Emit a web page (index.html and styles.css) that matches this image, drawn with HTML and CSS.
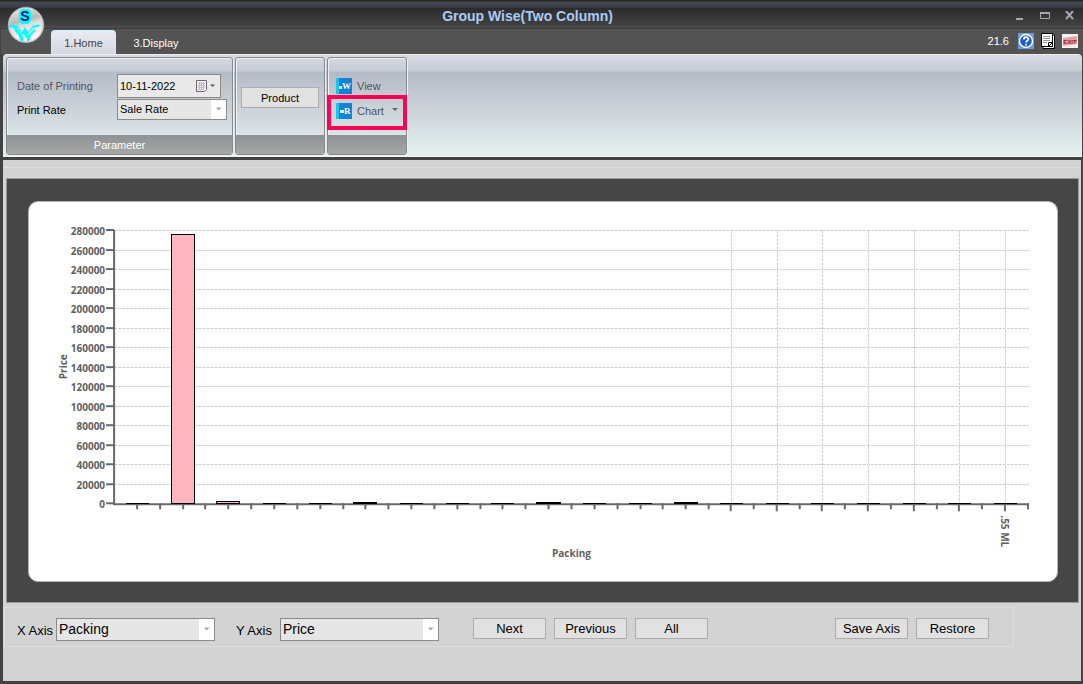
FILE: index.html
```html
<!DOCTYPE html>
<html lang="en">
<head>
<meta charset="utf-8">
<title>Group Wise(Two Column)</title>
<link rel="stylesheet" href="styles.css">
</head>
<body>
<div class="window">
  <svg class="logo" viewBox="0 0 38 38" aria-hidden="true">
    <defs>
      <linearGradient id="orb" x1="0" y1="0" x2=".3" y2="1">
        <stop offset="0" stop-color="#f4f4f4"/><stop offset=".45" stop-color="#b9b9b9"/><stop offset=".6" stop-color="#dedede"/><stop offset="1" stop-color="#ffffff"/>
      </linearGradient>
    </defs>
    <circle cx="19" cy="19" r="18.5" fill="#6b6b6b"/>
    <circle cx="19" cy="19" r="17" fill="url(#orb)" stroke="#d2d2d2" stroke-width="1.5"/>
    <path d="M15 3h6l3 3v9l-3 3h-6l-3-3V6z" fill="#00ffff"/>
    <path d="M2 19.500l3-1 6 1.500 4 6 3-5 3 5 4-6 6-1.500 3 1-2 1-5 1.500-5 5-3 6-2-5-1.500 0-2 5-3-6-4-5-5-1.500z" fill="#00ffff"/>
    <path d="M8 24l5 5 1 5M28 24l-5 5-1 5M15 28v7M21 28v7" stroke="#00ffff" stroke-width="2" fill="none"/>
    <path d="M10 21l6 9M26 21l-6 9" stroke="#e0e0e0" fill="none"/>
    <text class="logo-letter" x="18" y="15" text-anchor="middle">S</text>
  </svg>

  <header class="titlebar">
    <h1 class="title">Group Wise(Two Column)</h1>
    <div class="window-buttons">
      <button class="icon-button" aria-label="Minimize"><svg width="10" height="10"><path d="M1 8h7" stroke="#a2a9b5" stroke-width="2"/></svg></button>
      <button class="icon-button" aria-label="Maximize"><svg width="10" height="10"><path d="M.5 1.500h9v6h-9z" fill="none" stroke="#a2a9b5"/><path d="M0 2h10" stroke="#a2a9b5" stroke-width="2"/></svg></button>
      <button class="icon-button" aria-label="Close"><svg width="10" height="10"><path d="M1 0l7 8M8 0L1 8" stroke="#a2a9b5" stroke-width="2"/></svg></button>
    </div>
  </header>

  <nav class="tabs">
    <button class="tab tab-active">1.Home</button>
    <button class="tab">3.Display</button>
    <div class="tools">
      <span class="version">21.6</span>
      <button class="icon-button" aria-label="Help"><svg width="16" height="16"><path d="M0 0h16v16H0z" fill="#6b9bd8"/><circle cx="8" cy="8" r="6.5" fill="#1c5ccc" stroke="#fff" stroke-width="1.4"/><path d="M5.8 6.400c0-3 4.600-3 4.600-.3 0 1.600-2.300 1.700-2.300 3.400M8.100 10.700v1.800" fill="none" stroke="#fff" stroke-width="1.7"/></svg></button>
      <button class="icon-button" aria-label="Report"><svg width="14" height="16"><path d="M2 2h12v14H2z" fill="#000"/><path d="M.5.5h11v13H.5z" fill="#fff" stroke="#000"/><path d="M12.500 2.500v12h-10" fill="none" stroke="#fff"/><path d="M2 3.500h7M2 5.500h7M2 7.500h7M2 9.500h4" stroke="#999"/><path d="M7.500 13.500v-4h4z" fill="#fff" stroke="#000"/></svg></button>
      <button class="icon-button" aria-label="Exit"><svg width="16" height="14"><path d="M0 0h16v14H0z" fill="#f6f0f0"/><path d="M1 4l14-2v8L1 12z" fill="#e2a3a3"/><text class="exit-text" x="8" y="10" text-anchor="middle">EXIT</text></svg></button>
    </div>
  </nav>

  <section class="ribbon">
    <div class="group group-parameter">
      <div class="group-body fields">
        <label class="muted" for="date">Date of Printing</label>
        <div class="date-box">
          <input id="date" type="text" value="10-11-2022">
          <button class="icon-button date-button" aria-label="Open calendar"><svg width="20" height="12"><path d="M.5.5h10v9l-2 2h-8z" fill="#f4f4f6" stroke="#6c6672"/><path d="M2 3.500h7M2 5.500h7M2 7.500h7M2 9.500h5M3.500 2v8M5.500 2v8M7.500 2v8" stroke="#c0bac8"/><path d="M14 4.500h5L16.500 7z" fill="#555"/></svg></button>
        </div>
        <label for="rate">Print Rate</label>
        <div class="select-box">
          <select id="rate"><option>Sale Rate</option></select>
          <svg class="arrow" viewBox="0 0 15 18"><path d="M5 7h5.500L7.700 10z" fill="#a5a5a5"/></svg>
        </div>
      </div>
      <div class="group-footer">Parameter</div>
    </div>
    <div class="group group-product">
      <div class="group-body"><button class="push">Product</button></div>
      <div class="group-footer"></div>
    </div>
    <div class="group group-view">
      <div class="group-body">
        <button class="ribbon-item">
          <svg width="16" height="16"><path d="M1 0h15v16H1z" fill="#1383d8"/><path d="M0 0h3v16H0z" fill="#19c5f0"/><path d="M3 8h3v3H3z" fill="#d5ecfa"/><text class="book-letter" x="6" y="11">W</text></svg>View
        </button>
        <button class="ribbon-item ribbon-item-marked">
          <svg width="16" height="16"><path d="M1 0h15v16H1z" fill="#1383d8"/><path d="M0 0h3v16H0z" fill="#19c5f0"/><path d="M4 7h4v3H4z" fill="#d5ecfa"/><text class="book-letter" x="8" y="11">R</text></svg>Chart
          <svg class="item-arrow" width="6" height="8"><path d="M0 1h6L3 4z" fill="#666"/></svg>
        </button>
      </div>
      <div class="group-footer"></div>
    </div>
  </section>

  <main class="content">
    <div class="panel">
      <div class="card">
        <svg class="chart" id="chart" viewBox="0 0 1027 379" role="img" aria-label="Price by packing"></svg>
      </div>
    </div>
    <div class="controls">
      <label class="axis-label" for="xaxis">X Axis</label>
      <div class="select-box select-axis">
        <select id="xaxis"><option>Packing</option></select>
        <svg class="arrow" viewBox="0 0 15 18"><path d="M5 7h5.500L7.700 10z" fill="#a5a5a5"/></svg>
      </div>
      <label class="axis-label axis-label-y" for="yaxis">Y Axis</label>
      <div class="select-box select-axis">
        <select id="yaxis"><option>Price</option></select>
        <svg class="arrow" viewBox="0 0 15 18"><path d="M5 7h5.500L7.700 10z" fill="#a5a5a5"/></svg>
      </div>
      <div class="buttons buttons-nav">
        <button class="push">Next</button>
        <button class="push">Previous</button>
        <button class="push">All</button>
      </div>
      <div class="buttons buttons-save">
        <button class="push">Save Axis</button>
        <button class="push">Restore</button>
      </div>
    </div>
  </main>
</div>
<script src="chart.js"></script>
</body>
</html>
```

FILE: styles.css
```css
* { box-sizing: border-box; }
body { margin: 0; background: #535353; color: #000; font-family: "Liberation Sans", Arial, sans-serif; font-size: 13px; }
button, input, select { font: inherit; color: inherit; margin: 0; border-radius: 0; }
.window { position: relative; min-height: 100vh; display: flex; flex-direction: column; padding: 0 2px 3px 3px; background: #424242; }
.icon-button { display: block; padding: 0; border: 0; background: none; line-height: 0; }

.titlebar { display: flex; align-items: center; height: 29px; margin: 0 -2px 0 -3px; padding: 3px 8px 0 0; background: linear-gradient(#292929 0 1px, #43464f 2px, #3b3f49 7px, #2b2b2b 8px, #414141 25px, #4a4a4a 26px 28px, #3c3c3c 28px); }
.title { flex: 1; margin: 0; padding-left: 40px; text-align: center; font-size: 14px; line-height: 24px; color: #a9cbf8; }
.window-buttons { display: flex; gap: 15px; }

.logo { position: absolute; left: 7px; top: 6px; width: 38px; height: 38px; }
.logo-letter { font: bold 14px "Liberation Sans", sans-serif; fill: #00138c; }

.tabs { display: flex; align-items: flex-end; height: 25px; margin-right: -2px; margin-left: -2px; padding: 0 5px 0 50px; background: #535353; }
.tab { width: 78px; height: 24px; padding: 1px 0 0; border: 0; background: none; color: #fff; font-size: 11px; }
.tab-active { width: 65px; margin-right: 1px; border: 1px solid #c5f3f6; border-bottom: 0; border-radius: 4px 4px 0 0; background: linear-gradient(#e9ebf2, #d4d7df); color: #444; }
.tools { display: flex; align-items: center; gap: 7px; height: 25px; margin-left: auto; padding-bottom: 1px; }
.version { margin-right: 2px; color: #fff; font-size: 11px; }
.exit-text { font: bold 6px "Liberation Sans", sans-serif; fill: #a31620; }

.ribbon { display: flex; gap: 2px; height: 103px; margin-right: -1px; padding: 2px 3px 1px; border-radius: 4px 4px 0 0; border-top: 1px solid #eceef2; border-bottom: 1px solid #f4f4f4; background: linear-gradient(#d8dbe2, #c7cbd5 16px, #b5bbc6 17px, #e7f1f0); font-size: 11px; }
.group { display: flex; flex-direction: column; border: 1px solid #858990; border-radius: 3px; box-shadow: inset 1px 1px #eef0f3, 1px 1px #eef0f3; overflow: hidden; }
.group-parameter { width: 227px; }
.group-product { width: 90px; }
.group-view { width: 80px; overflow: visible; }
.group-body { flex: 1; }
.group-footer { height: 19px; line-height: 20px; text-align: center; color: #fff; background: linear-gradient(#8f9292, #a5a8a7); }
.fields { display: grid; grid-template-columns: 100px 1fr; grid-template-rows: 24px 21px; row-gap: 1px; align-items: center; align-content: start; padding: 16px 5px 0 10px; }
.muted { color: #50545c; }
.date-box { display: flex; align-items: center; width: 104px; height: 24px; padding-right: 4px; border: 1px solid #8a8a8a; background: #e9e9e9; }
.date-box input { flex: 1; min-width: 0; padding: 0 2px; border: 0; background: none; }
.select-box { position: relative; height: 21px; }
.select-box select { width: 100%; height: 100%; padding: 0 18px 2px 2px; border: 1px solid #8a8a8a; background: #e6e6e6; appearance: none; }
.arrow { position: absolute; right: 1px; top: 1px; width: 15px; height: calc(100% - 2px); background: #fff; pointer-events: none; }
.push { padding: 0; border: 1px solid #adadad; background: #e1e1e1; height: 21px; }
.group-product .push { width: 78px; margin: 29px 5px 0; }
.ribbon-item { display: flex; align-items: center; gap: 5px; width: 100%; height: 25px; padding: 0 8px; border: 0; background: none; color: #50545c; }
.group-view .group-body { padding-top: 15px; }
.ribbon-item-marked { position: relative; }
.ribbon-item-marked::after { content: ""; position: absolute; inset: -3px -1px -7px; border: 4px solid #ff0055; }
.item-arrow { margin-left: auto; }
.book-letter { font: bold 9px "Liberation Serif", serif; fill: #fff; }

.content { flex: 1; margin-top: 3px; padding: 7px 2px 24px 1px; background: #d3d3d3; }
.panel { margin: 0 0 4px 2px; padding: 22px 20px 20px 21px; border: 1px solid #9b9b9b; background: #464646; }
.content::before { content: ""; display: block; height: 1px; margin-bottom: 10px; background: #dedede; }
.card { border: 1px solid #b4b4b4; border-radius: 10px; background: #fff; }
.chart { display: block; width: 100%; height: auto; }
.axis { stroke: #696969; stroke-width: 2; fill: none; }
.grid { stroke: #cfcfcf; stroke-dasharray: 3 1; shape-rendering: crispEdges; }
.bar { fill: #ffb6c1; stroke: #000; shape-rendering: crispEdges; }
.chart text { font: bold 10px "Open Sans", sans-serif; fill: #606060; }

.controls { display: flex; align-items: center; max-width: 1010px; height: 40px; padding: 2px 24px 0 12px; border: 1px solid #dedede; }
.axis-label { width: 39px; padding-top: 4px; white-space: nowrap; }
.axis-label-y { width: 44px; margin-left: 21px; }
.select-axis { width: 159px; height: 23px; margin-top: 3px; font-size: 14px; }
.buttons { display: flex; gap: 8px; }
.buttons .push { width: 73px; }
.buttons-nav { margin-left: 34px; }
.buttons-save { margin-left: auto; }
```

FILE: chart.js
```javascript
const values = [0, 276000, 2400, 0, 0, 1200, 0, 0, 0, 1200, 0, 0, 1200, 0, 0, 0, 0, 0, 0, 0];
const left = 85, right = 999, top0 = 28, base = 301, max = 280000;
const step = (right - left) / values.length;
const y = v => Math.round(base - v / max * (base - top0));
const half = n => Math.round(n) + 0.5;
let out = '';

for (let v = 0; v <= max; v += 20000) {
  if (v) out += `<path class="grid" d="M${left} ${y(v) + 0.5}H${right}"/>`;
  out += `<path class="axis" d="M${left - 8} ${y(v)}H${left}"/>`;
  out += `<text x="${left - 9}" y="${y(v) + 5}" text-anchor="end">${v}</text>`;
}
for (let i = 13; i < values.length; i++) {
  out += `<path class="grid" d="M${half(left + step * (i + 0.5)) - 1} ${top0}V${base}"/>`;
}
out += `<path class="axis" d="M${left} ${top0}V${base + 1}H${right}"/>`;
for (let i = 1; i <= values.length * 2; i++) {
  const x = Math.round(left + step * i / 2);
  const long = i >= 27 && i % 2;
  out += `<path class="axis" d="M${x - (i > 26 ? 1 : 0)} ${base}v${long ? 8 : 6}"/>`;
}
values.forEach((v, i) => {
  const x = half(left + step * (i + 0.5) - 12);
  out += `<path class="bar" d="M${x} ${base + 0.5}V${y(v) + 0.5}h23V${base + 0.5}z"/>`;
});
out += '<text transform="translate(38 177) rotate(-90)">Price</text>';
out += '<text x="542" y="355" text-anchor="middle">Packing</text>';
out += '<text transform="translate(971 313) rotate(90)">.55 ML</text>';
document.getElementById('chart').innerHTML = out;
```
